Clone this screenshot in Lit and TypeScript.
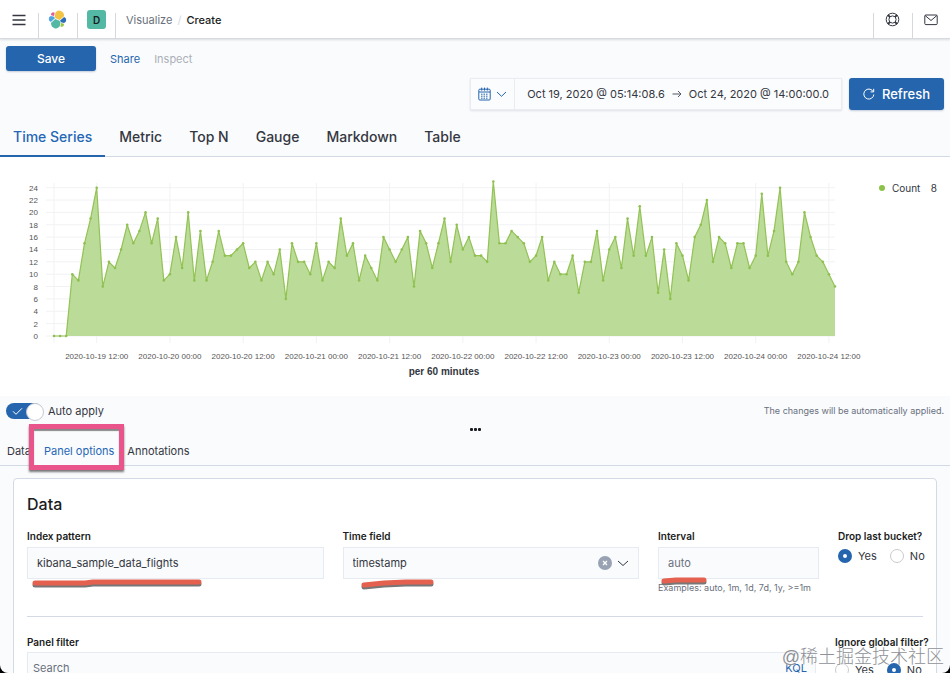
import { LitElement, html, svg, css } from "lit";
import { customElement, property, state } from "lit/decorators.js";
import { classMap } from "lit/directives/class-map.js";

const COUNTS = [
  0, 0, 0, 10, 9, 15, 19, 24, 8, 12, 11, 14, 18, 15, 17, 20, 15, 19, 9, 10, 16, 11, 20, 9,
  17, 9, 12, 17, 13, 13, 14, 15, 11, 12, 9, 12, 10, 14, 6, 15, 12, 12, 10, 15, 9, 12, 11, 19,
  13, 15, 9, 13, 11, 9, 16, 14, 12, 14, 16, 8, 17, 15, 11, 15, 19, 12, 18, 14, 16, 13, 13, 12,
  25, 15, 15, 17, 16, 15, 12, 13, 16, 9, 12, 10, 10, 13, 7, 12, 12, 17, 9, 14, 16, 11, 19, 13,
  21, 13, 16, 7, 14, 6, 15, 13, 9, 16, 18, 22, 12, 16, 15, 11, 15, 15, 11, 13, 23, 13, 17, 24,
  12, 10, 12, 20, 16, 13, 12, 10, 8,
];

const TICKS = [
  "2020-10-19 12:00", "2020-10-20 00:00", "2020-10-20 12:00", "2020-10-21 00:00",
  "2020-10-21 12:00", "2020-10-22 00:00", "2020-10-22 12:00", "2020-10-23 00:00",
  "2020-10-23 12:00", "2020-10-24 00:00", "2020-10-24 12:00",
];

const PLOT = { left: 54, right: 835, base: 179, unit: 6.18 };
const px = (hour: number) => PLOT.left + (hour * (PLOT.right - PLOT.left)) / (COUNTS.length - 1);
const py = (count: number) => PLOT.base - count * PLOT.unit;

/** Area chart of hourly counts. */
@customElement("count-chart")
class CountChart extends LitElement {
  static styles = css`
    :host { display: block; min-width: 0; }
    svg { display: block; width: 100%; height: auto; overflow: visible; }
    .grid { stroke: #f1f2f4; stroke-width: 1; }
    .area { fill: #bbdb99; }
    .line { fill: none; stroke: #93c255; stroke-width: 1.2; stroke-linejoin: round; }
    .dot { fill: #8fc04f; }
    .tick { font: 8px "Liberation Sans", sans-serif; fill: #555; }
    .y { text-anchor: end; }
    .x { text-anchor: middle; }
    .axis { font: bold 10px "Liberation Sans", sans-serif; fill: #343741; text-anchor: middle; }
  `;

  render() {
    const pts = COUNTS.map((c, i) => `${px(i).toFixed(1)},${py(c).toFixed(1)}`);
    const levels = Array.from({ length: 13 }, (_, i) => i * 2);
    return html`<svg viewBox="0 0 870 226" role="img" aria-label="Count per 60 minutes">
      ${levels.map((v) => svg`<line class="grid" x1="46" x2="835" y1=${py(v)} y2=${py(v)}></line>
        <text class="tick y" x="38" y=${py(v) + 3}>${v}</text>`)}
      <line class="grid" x1="54" x2="54" y1="26" y2="186"></line>
      ${TICKS.map((t, i) => svg`<line class="grid" x1=${px(7 + i * 12)} x2=${px(7 + i * 12)} y1="26" y2="186"></line>
        <text class="tick x" x=${px(7 + i * 12)} y="202">${t}</text>`)}
      <polygon class="area" points="${PLOT.left},${PLOT.base} ${pts.join(" ")} ${PLOT.right},${PLOT.base}"></polygon>
      <polyline class="line" points=${pts.join(" ")}></polyline>
      ${COUNTS.map((c, i) => svg`<circle class="dot" cx=${px(i)} cy=${py(c)} r="1.3"></circle>`)}
      <text class="axis" x="444" y="218">per 60 minutes</text>
    </svg>`;
  }
}

/** A captioned pair of yes / no radio buttons. */
@customElement("yes-no")
class YesNo extends LitElement {
  @property() caption = "";
  @property() value = "Yes";
  @property({ type: Boolean, reflect: true }) roomy = false;

  static styles = css`
    :host { display: block; }
    fieldset { border: 0; margin: 0; padding: 0; min-width: 0; }
    legend { padding: 0; font-size: 10px; font-weight: 600; line-height: 14px; color: #1a1c21; white-space: nowrap; }
    .row { display: flex; gap: 13px; margin-top: 6px; }
    :host([roomy]) .row { margin-top: 14px; }
    label { display: flex; align-items: center; gap: 6px; line-height: 14px; font-size: 11px; color: #343741; }
    input {
      appearance: none; box-sizing: border-box; width: 14px; height: 14px; margin: 0;
      border: 1px solid #c9cbcd; border-radius: 50%; background: #fff;
    }
    input:checked { border: 5px solid #2565ae; }
  `;

  render() {
    return html`<fieldset>
      <legend>${this.caption}</legend>
      <div class="row">
        ${["Yes", "No"].map((o) => html`<label>
          <input type="radio" name="choice" .checked=${this.value === o} @change=${() => (this.value = o)} />${o}
        </label>`)}
      </div>
    </fieldset>`;
  }
}

@customElement("app-root")
class AppRoot extends LitElement {
  @state() chartTab = "Time Series";
  @state() optionTab = "Panel options";

  static styles = css`
    :host {
      display: block; height: 100vh; overflow: hidden; background: #000; color: #343741;
      font-family: Inter, "Liberation Sans", sans-serif; font-size: 11px; line-height: 16px;
    }
    * { box-sizing: border-box; }
    button, input, select { font: inherit; color: inherit; margin: 0; }
    button { border: 0; padding: 0; background: none; cursor: pointer; }
    a { color: inherit; text-decoration: none; }
    svg { display: block; }
    .window { position: relative; height: 100%; overflow: hidden; background: #fafbfd; border-radius: 0 0 8px 8px; }

    .top { position: relative; display: flex; height: 39px; background: #fff; border-bottom: 1px solid #d6d9de; box-shadow: 0 1px 2px #d9dce1; }
    .cell { display: flex; justify-content: center; align-items: center; width: 39px; height: 39px; }
    .cell:first-child { width: 38px; }
    .cell + .cell, .crumbs, .right .cell { background: linear-gradient(#d5d8dd, #d5d8dd) left bottom / 1px 26px no-repeat; }
    .space { display: grid; place-items: center; width: 19px; height: 19px; border-radius: 3px; background: #54b9a4; color: #1a1c21; font-size: 10px; font-weight: 600; }
    .crumbs { display: flex; align-items: center; gap: 5px; height: 39px; padding-left: 11px; margin-left: -1px; color: #69707d; }
    .crumbs .sep { color: #d3dae6; }
    .crumbs .here { color: #1a1c21; font-weight: 500; }
    .right { display: flex; margin-left: auto; }
    .right .cell:first-child { width: 39px; }
    .right .cell:last-child { width: 38px; }

    .menu { display: flex; align-items: center; gap: 14px; padding: 7px 6px 0; }
    .primary { background: #2565ae; color: #fff; border-radius: 3px; box-shadow: 0 1px 2px #c3cbd8; }
    .save { width: 90px; height: 25px; font-size: 12px; font-weight: 500; }
    .link { color: #2565ae; }
    .off { color: #abb0b8; }

    .time { display: flex; justify-content: flex-end; gap: 7px; padding: 7px 6px 0; }
    .picker { display: flex; height: 32px; background: #fbfcfd; border: 1px solid #e9ecf1; box-shadow: 0 1px 2px #dde1e8; }
    .quick { display: flex; align-items: center; justify-content: center; gap: 5px; width: 44px; border-right: 1px solid #e9ecf1; color: #2565ae; }
    .range { display: flex; align-items: center; gap: 7px; padding: 0 12px; }
    .refresh { display: flex; align-items: center; justify-content: center; gap: 7px; width: 95px; height: 32px; font-size: 13px; font-weight: 500; }

    .tabs { display: flex; border-bottom: 1px solid #d3dae6; }
    .big { gap: 1px; padding-top: 8px; font-size: 14px; font-weight: 500; }
    .big button { height: 39px; padding: 0 13px; border-bottom: 2px solid transparent; margin-bottom: -1px; }
    .tabs .on { color: #2467b5; }
    .big .on { border-bottom-color: #2565ae; }

    .chart { display: flex; align-items: flex-start; height: 239px; background: #fff; }
    .chart count-chart { flex: 1; }
    .key { display: flex; align-items: center; width: 80px; padding: 0 13px 0 9px; margin-top: 23px; font-size: 10px; }
    .key i { width: 6px; height: 6px; margin-right: 7px; border-radius: 50%; background: #8bc34a; }
    .key span { margin-left: auto; }

    .apply { display: flex; align-items: center; height: 16px; margin: 7px 6px 0; }
    .switch { display: flex; align-items: center; gap: 6px; position: relative; }
    .switch input { appearance: none; width: 36px; height: 16px; border-radius: 8px; background: #2565ae; }
    .switch input::after { content: ""; display: block; width: 16px; height: 16px; margin-left: 20px; border-radius: 50%; background: #fff; border: 1px solid #c5cad3; }
    .switch svg { position: absolute; left: 6px; top: 4px; }
    .note { margin-left: auto; font-size: 9px; color: #69707d; }
    .grip { display: flex; justify-content: center; gap: 1px; width: 100%; height: 4px; margin-top: 9px; }
    .grip i { width: 3px; height: 3px; border-radius: 1px; background: #1a1c21; }
    .small { height: 34px; padding: 0 7px; gap: 13px; }
    .small button { height: 38px; }

    .panel { margin: 12px 13px 0; padding: 0 13px; background: #fff; border: 1px solid #d3dae6; border-radius: 4px; }
    h2 { margin: 13px 0; font-size: 16px; line-height: 24px; font-weight: 500; color: #1a1c21; }
    .row { display: grid; grid-template-columns: 1fr 1fr 161px 85px; gap: 19px; }
    .row.filter { grid-template-columns: 1fr 88px; }
    .field { position: relative; min-width: 0; }
    .field > label { display: block; font-size: 10px; font-weight: 600; line-height: 14px; color: #1a1c21; }
    .box { display: block; width: 100%; height: 32px; margin-top: 4px; padding: 0 9px; border: 1px solid #e6eaf1; border-radius: 0; background: #fafbfd; appearance: none; outline: 0; }
    input::placeholder { color: #69707d; opacity: 1; }
    .tools { position: absolute; right: 10px; top: 27px; display: flex; align-items: center; gap: 5px; pointer-events: none; }
    .clear { display: grid; place-items: center; width: 14px; height: 14px; border-radius: 50%; background: #98a2b3; }
    .hint { margin: 2px 0 0; font-size: 9px; line-height: 14px; color: #69707d; white-space: nowrap; }
    hr { height: 1px; margin: 21px 0 18px; border: 0; background: #d3dae6; }
    .search { display: flex; height: 32px; margin-top: 3px; border: 1px solid #e6eaf1; background: #fafbfd; }
    .search input { flex: 1; padding: 0 5px; border: 0; background: none; outline: 0; }
    .search button { padding: 0 8px; color: #2565ae; }

    .mark { position: absolute; left: 29px; top: 424px; width: 95px; height: 46px; border: 5px solid #e9558b; box-shadow: 0 2px 2px #777, inset 0 2px 1px #888; pointer-events: none; }
    .strokes { position: absolute; left: 0; top: 570px; pointer-events: none; }
    .stamp { position: absolute; right: 6px; bottom: 4px; font: 300 18px/24px "Liberation Sans", "Noto Sans CJK SC", sans-serif; color: #8e9196; text-shadow: 0 0 2px #fff; white-space: nowrap; pointer-events: none; }
  `;

  private tab(name: string, current: string, pick: (n: string) => void) {
    return html`<button role="tab" aria-selected=${current === name} class=${classMap({ on: current === name })}
      @click=${() => pick(name)}>${name}</button>`;
  }

  render() {
    return html`<div class="window">
      <header class="top">
        <button class="cell" aria-label="Menu">
          <svg width="14" height="12" viewBox="0 0 14 12"><path d="M.5 1.5h13M.5 6h13M.5 10.5h13" stroke="#343741" stroke-width="1.6"/></svg>
        </button>
        <a class="cell" href="#" aria-label="Home">
          <svg width="19" height="19" viewBox="0 0 32 32">
            <path fill="#F3C444" d="M12.600 13.700 19.700 17l7.200-6.300a7.500 7.500 0 0 0 .14-1.580A8 8 0 0 0 12.450 4.600l-1.200 6.180z"/>
            <path fill="#54B9A4" d="M5.300 21.300a7.600 7.600 0 0 0-.15 1.600 8.030 8.030 0 0 0 14.660 4.510l1.180-6.150-1.580-3.010-7.100-3.250z"/>
            <path fill="#E25C9B" d="m5.260 9 4.860 1.150 1.060-5.530A3.840 3.840 0 0 0 5.260 9z"/>
            <path fill="#52A5E0" d="M4.830 10.160a5.350 5.350 0 0 0-.08 10.060l6.830-6.170-1.250-2.680z"/>
            <path fill="#9BC646" d="M20.860 27.400a3.820 3.820 0 0 0 5.880-4.370l-4.850-1.140z"/>
            <path fill="#2E6DB8" d="m21.830 20.560 5.350 1.250a5.380 5.380 0 0 0 .09-10.060l-7 6.130z"/>
          </svg>
        </a>
        <button class="cell" aria-label="Default space"><span class="space">D</span></button>
        <nav class="crumbs"><a href="#">Visualize</a><span class="sep">/</span><span class="here">Create</span></nav>
        <div class="right">
          <button class="cell" aria-label="Help">
            <svg width="15" height="15" viewBox="0 0 15 15" fill="none" stroke="#343741"><circle cx="7.500" cy="7.500" r="6.300"/><circle cx="7.500" cy="7.500" r="3.600"/><path stroke-width="1.800" d="m2.800 2.800 2.200 2.200m5 5 2.200 2.200m0-9.400L10 5m-5 5-2.200 2.200"/></svg>
          </button>
          <button class="cell" aria-label="News">
            <svg width="14" height="12" viewBox="0 0 14 12" fill="none" stroke="#343741"><rect x=".8" y="1" width="12.400" height="9.600" rx="1"/><path d="m1.200 1.600 5.800 4.900 5.800-4.900"/></svg>
          </button>
        </div>
      </header>

      <div class="menu">
        <button class="primary save">Save</button>
        <button class="link">Share</button>
        <button class="off" disabled>Inspect</button>
      </div>

      <div class="time">
        <div class="picker">
          <button class="quick" aria-label="Quick ranges">
            <svg width="13" height="14" viewBox="0 0 13 14" fill="none" stroke="currentColor"><rect x=".8" y="2.200" width="11.400" height="10.800" rx="1"/><path d="M1 5h11M3.700.6v3M9.300.6v3M6.500.6v3"/><path stroke-dasharray="1.500 1" d="M3 7.200h7.500M3 9.200h7.500M3 11.200h7.500"/></svg>
            <svg width="11" height="7" viewBox="0 0 11 7" fill="none" stroke="currentColor"><path d="m1 1 4.500 4.300L10 1"/></svg>
          </button>
          <div class="range">
            <button>Oct 19, 2020 @ 05:14:08.6</button>
            <svg width="10" height="8" viewBox="0 0 10 8" fill="none" stroke="#535966"><path d="M.5 4h8.500M6 1l3 3-3 3"/></svg>
            <button>Oct 24, 2020 @ 14:00:00.0</button>
          </div>
        </div>
        <button class="primary refresh">
          <svg width="12" height="12" viewBox="0 0 12 12" fill="none" stroke="#fff"><path d="M10.800 6.500A5 5 0 1 1 9 2.200l1.500 1.500M10.700.8v3.100H7.600"/></svg>
          Refresh
        </button>
      </div>

      <div class="tabs big" role="tablist">
        ${["Time Series", "Metric", "Top N", "Gauge", "Markdown", "Table"].map((n) => this.tab(n, this.chartTab, (v) => (this.chartTab = v)))}
      </div>

      <section class="chart">
        <count-chart></count-chart>
        <div class="key"><i></i>Count<span>8</span></div>
      </section>

      <div class="apply">
        <label class="switch">
          <input type="checkbox" role="switch" checked />
          <svg width="11" height="9" viewBox="0 0 11 9" fill="none" stroke="#fff"><path d="m1 4.300 3 3L10 1.300"/></svg>
          Auto apply
        </label>
        <span class="note">The changes will be automatically applied.</span>
      </div>
      <button class="grip" aria-label="Resize"><i></i><i></i><i></i></button>

      <div class="tabs small" role="tablist">
        ${["Data", "Panel options", "Annotations"].map((n) => this.tab(n, this.optionTab, (v) => (this.optionTab = v)))}
      </div>

      <section class="panel">
        <h2>Data</h2>
        <div class="row">
          <div class="field">
            <label for="index">Index pattern</label>
            <input id="index" class="box" value="kibana_sample_data_flights" />
          </div>
          <div class="field">
            <label for="stamp">Time field</label>
            <select id="stamp" class="box"><option>timestamp</option></select>
            <div class="tools">
              <span class="clear"><svg width="6" height="6" viewBox="0 0 6 6"><path d="m1 1 4 4m0-4L1 5" stroke="#fff" stroke-width="1.300"/></svg></span>
              <svg width="12" height="7" viewBox="0 0 12 7" fill="none" stroke="#343741"><path d="m1 1 5 4.500L11 1"/></svg>
            </div>
          </div>
          <div class="field">
            <label for="interval">Interval</label>
            <input id="interval" class="box" placeholder="auto" />
            <p class="hint">Examples: auto, 1m, 1d, 7d, 1y, &gt;=1m</p>
          </div>
          <yes-no caption="Drop last bucket?" value="Yes"></yes-no>
        </div>
        <hr />
        <div class="row filter">
          <div class="field">
            <label for="filter">Panel filter</label>
            <div class="search"><input id="filter" placeholder="Search" /><button>KQL</button></div>
          </div>
          <yes-no caption="Ignore global filter?" value="No" roomy></yes-no>
        </div>
      </section>

      <div class="mark"></div>
      <svg class="strokes" width="720" height="24" viewBox="0 0 720 24" fill="none" stroke-width="5" stroke-linecap="round" stroke-linejoin="round">
        <g stroke="#777" transform="translate(0 2)"><path d="M35 13h50l8-1h106"/><path d="m364 15 20-2 22-1h25"/><path d="m664 11 12-1h28"/></g>
        <g stroke="#e4604f"><path d="M35 13h50l8-1h106"/><path d="m364 15 20-2 22-1h25"/><path d="m664 11 12-1h28"/></g>
      </svg>
      <div class="stamp">@稀土掘金技术社区</div>
    </div>`;
  }
}
